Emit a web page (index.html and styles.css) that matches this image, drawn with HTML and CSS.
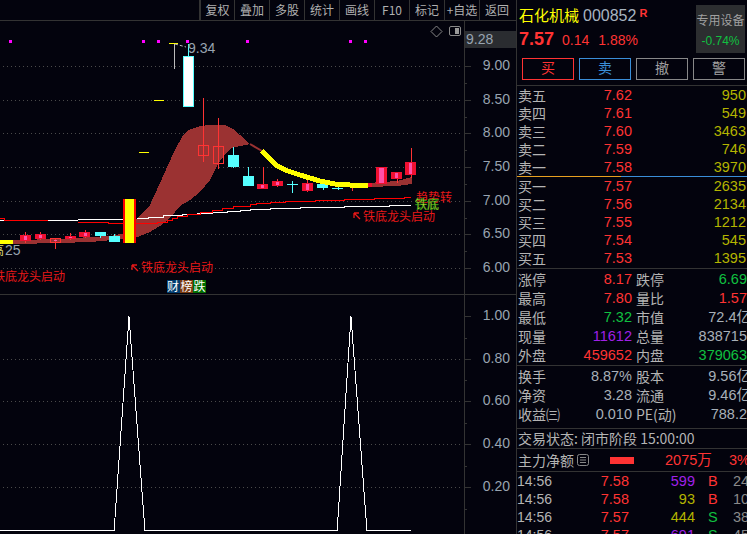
FILE: index.html
```html
<!DOCTYPE html>
<html lang="zh">
<head>
<meta charset="utf-8">
<title>石化机械 000852</title>
<link rel="stylesheet" href="styles.css">
</head>
<body>
<div class="app">
  <main class="main">
    <nav class="toolbar">
      <span class="tool tool-first">复权</span><span class="tool">叠加</span><span class="tool">多股</span><span class="tool">统计</span><span class="tool">画线</span><span class="tool">F10</span><span class="tool">标记</span><span class="tool">+自选</span><span class="tool">返回</span>
    </nav>
    <svg class="chart" viewBox="0 21 516 513" width="516" height="513" xmlns="http://www.w3.org/2000/svg">
      <!-- grid -->
      <g class="grid">
        <path d="M3 66.5H462M3 100.5H462M3 133.5H462M3 167.5H462M3 201.5H462M3 234.5H462M3 268.5H462"/>
        <path d="M3 359.5H462M3 401.5H462M3 444.5H462M3 487.5H462"/>
      </g>
      <path class="rule" d="M464.5 21V534M0 294.5H516"/>
      <path class="rule" d="M464 66.5H471M464 100.5H471M464 133.5H471M464 167.5H471M464 201.5H471M464 234.5H471M464 268.5H471M464 83.5H467M464 117.5H467M464 150.5H467M464 184.5H467M464 218.5H467M464 251.5H467M464 316.5H471M464 359.5H471M464 401.5H471M464 444.5H471M464 487.5H471M464 338.5H467M464 380.5H467M464 423.5H467M464 466.5H467M464 509.5H467"/>

      <!-- axis -->
      <rect class="price-tag" x="465" y="31" width="51" height="17"/>
      <text class="axis" x="466" y="43.500">9.28</text>
      <g class="axis axis-end">
        <text x="510" y="70">9.00</text><text x="510" y="104">8.50</text><text x="510" y="137">8.00</text><text x="510" y="171">7.50</text><text x="510" y="205">7.00</text><text x="510" y="238">6.50</text><text x="510" y="272">6.00</text>
        <text x="510" y="320">1.00</text><text x="510" y="363">0.80</text><text x="510" y="405">0.60</text><text x="510" y="448">0.40</text><text x="510" y="491">0.20</text>
      </g>

      <!-- top icons -->
      <path class="icon-line" d="M436.5 26L442 31.5L436.5 37L431 31.5Z"/>
      <rect class="icon-line" x="449.5" y="26.5" width="11" height="9" rx="1.5"/>
      <rect class="icon-fill" x="455" y="28" width="4" height="6"/>

      <!-- magenta markers -->
      <g class="marker">
        <rect x="9" y="40" width="3" height="3"/><rect x="142" y="40" width="3" height="3"/><rect x="157" y="40" width="3" height="3"/><rect x="186" y="40" width="3" height="3"/><rect x="246" y="40" width="3" height="3"/><rect x="349" y="40" width="3" height="3"/><rect x="364" y="40" width="3" height="3"/>
      </g>

      <!-- short yellow dashes -->
      <path class="dash" d="M154 100.5H164M139 152.5H149M169 43.5H178"/>

      <!-- cloud and band -->
      <polygon class="cloud" points="135,220 143,213 150,205 160,183 168,165 175,150 182,137 188,130 200,126 210,125 225,125 233,129 240,135 250,144 240,146 232,148 225,154 218,164 210,180 200,192 190,200 180,206 170,218 160,226 150,232 135,238"/>
      <polyline class="cloud-line" points="250,144 262,151"/>
      <polygon class="cloud" points="13,240 60,239 90,237 110,236 125,233 125,239 90,242 60,243 13,244"/>
      <polygon class="cloud" points="368,183 397,181 412,177 412,184 397,186 368,187"/>

      <!-- moving lines -->
      <path class="line-white" d="M0 220.5H19M48 220.5H78M78 219.5H125M137 218.5H148V217.5H163V215.5H182V214.5H197V213.5H212V212.5H227V211.5H240V210.5H250V209.5H270V208.5H300V207.5H344V206.5H389V205.5H411"/>
      <path class="line-red" d="M0 218.5H4V220.5H19V220.5H48M78 222.5H108V223.5H124M135 223.5H157V222.5H167V220.5H172V218.5H177V216.5H187V214.5H200V212.5H212V210.5H222V208.5H233V206.5H250V204.5H256V203.5H270V202.5H285V201.5H315V200.5H344V199.5H374V198.5H404V197.5H411"/>

      <!-- candles -->
      <g class="wick-red">
        <path d="M25.5 232V243M40.5 232V240M55.5 238V249M70.5 233V240M85.5 230V238M203.5 98V162M218.5 118V169M263.5 167V188M277.5 179V187M307.5 180V192M352.5 187V191M397.5 172V183M411.5 148V178"/>
      </g>
      <g class="wick-cyan">
        <path d="M100.5 236V238M114.5 234V238M233.5 147V168M248.5 167V177M292.5 181V193M287 184.5H298M323.5 185V190M338.5 183V190M332 188.5H343"/>
      </g>
      <g class="body-red">
        <rect x="20" y="235" width="11" height="6"/><rect x="35" y="234" width="11" height="5"/><rect x="65" y="236" width="11" height="3"/><rect x="79" y="232" width="11" height="5"/>
        <rect x="257" y="184" width="11" height="5"/><rect x="272" y="181" width="11" height="5"/><rect x="302" y="183" width="11" height="8"/><rect x="361" y="183" width="11" height="4"/><rect x="376" y="167" width="11" height="17"/><rect x="391" y="172" width="11" height="7"/><rect x="405" y="162" width="11" height="13"/>
      </g>
      <g class="body-pink">
        <rect x="24" y="236" width="3" height="4"/><rect x="39" y="235" width="3" height="3"/><rect x="54" y="240" width="3" height="1"/><rect x="69" y="237" width="3" height="1"/><rect x="84" y="233" width="3" height="3"/>
        <rect x="261" y="185" width="3" height="3"/><rect x="276" y="182" width="3" height="3"/><rect x="306" y="184" width="3" height="6"/><rect x="379" y="168" width="5" height="15"/><rect x="395" y="173" width="3" height="5"/><rect x="409" y="163" width="3" height="11"/>
      </g>
      <rect class="body-hollow" x="50.5" y="238.5" width="10" height="4"/>
      <rect class="body-hollow" x="198.5" y="145.5" width="10" height="10"/>
      <rect class="body-hollow" x="213.5" y="146.5" width="10" height="17"/>
      <g class="body-cyan">
        <rect x="95" y="232" width="11" height="4"/><rect x="109" y="236" width="11" height="6"/><rect x="228" y="155" width="11" height="12"/><rect x="243" y="176" width="11" height="10"/><rect x="317" y="184" width="11" height="4"/>
      </g>
      <rect class="body-white" x="183.5" y="56.5" width="10" height="50"/>
      <path class="wick-cyan" d="M188.5 44V56"/>
      <rect class="bar-red" x="123" y="199" width="13" height="44"/>
      <rect class="solid-yellow" x="125" y="199" width="9" height="44"/>

      <!-- thick yellow curve -->
      <polyline class="curve" points="262,151 268,157 276,165 285,170 300,175 320,181 335,184 350,185 368,186"/>
      <rect class="solid-yellow" x="0" y="240" width="13" height="4"/>

      <!-- high mark -->
      <path class="pointer" d="M174.5 44V69"/>
      <path class="pointer-dash" d="M175 44L186 47"/>
      <text class="mark" x="188" y="53">9.34</text>
      <text class="mark-cjk" x="-8" y="255">高</text>
      <text class="mark" x="5" y="255">25</text>

      <!-- signals -->
      <g class="signal">
        <text x="-7" y="281">铁底龙头启动</text>
        <text x="141" y="272">铁底龙头启动</text>
        <text x="363" y="221">铁底龙头启动</text>
        <text x="416" y="202">趋势转</text>
      </g>
      <path class="signal-arrow" d="M132 265L138 271M132 265V270M132 265H137M354 213L360 219M354 213V218M354 213H359"/>
      <text class="signal-yellow" x="415" y="209">铁底</text>

      <!-- badges -->
      <rect class="badge-blue" x="167" y="280" width="13" height="13"/>
      <rect class="badge-brown" x="180" y="280" width="13" height="13"/>
      <rect class="badge-green" x="193" y="280" width="13" height="13"/>
      <g class="badge-text">
        <text x="167" y="291">财</text><text x="180.500" y="291">榜</text><text x="193.500" y="291">跌</text>
      </g>

      <!-- lower indicator -->
      <path class="peak" d="M0 530.500H114.500V525L129 316.500L144.500 525V530.500H337.500V525L351 316.500L366.500 525V530.500H411"/>
    </svg>
  </main>

  <aside class="side">
    <header class="head">
      <div class="head-top">
        <div class="head-info">
          <div class="title-row"><span class="stock-name">石化机械</span><span class="stock-code">000852</span><span class="stock-flag">R</span></div>
          <div class="quote-row"><span class="quote-price">7.57</span><span class="quote-change">0.14</span><span class="quote-change">1.88%</span></div>
        </div>
        <div class="sector"><span class="sector-name">专用设备</span><span class="sector-pct">-0.74%</span></div>
      </div>
      <div class="actions">
        <span class="action action-buy">买</span><span class="action action-sell">卖</span><span class="action">撤</span><span class="action">警</span>
      </div>
    </header>

    <section class="book">
      <div class="level"><span class="lbl">卖五</span><span class="red">7.62</span><span class="vol">950</span></div>
      <div class="level"><span class="lbl">卖四</span><span class="red">7.61</span><span class="vol">549</span></div>
      <div class="level"><span class="lbl">卖三</span><span class="red">7.60</span><span class="vol">3463</span></div>
      <div class="level"><span class="lbl">卖二</span><span class="red">7.59</span><span class="vol">746</span></div>
      <div class="level"><span class="lbl">卖一</span><span class="red">7.58</span><span class="vol">3970</span></div>
    </section>
    <div class="split"></div>
    <section class="book book-bid">
      <div class="level"><span class="lbl">买一</span><span class="red">7.57</span><span class="vol">2635</span></div>
      <div class="level"><span class="lbl">买二</span><span class="red">7.56</span><span class="vol">2134</span></div>
      <div class="level"><span class="lbl">买三</span><span class="red">7.55</span><span class="vol">1212</span></div>
      <div class="level"><span class="lbl">买四</span><span class="red">7.54</span><span class="vol">545</span></div>
      <div class="level"><span class="lbl">买五</span><span class="red">7.53</span><span class="vol">1395</span></div>
    </section>

    <section class="stats">
      <div class="stat"><span class="lbl">涨停</span><span class="red">8.17</span><span class="lbl">跌停</span><span class="green">6.69</span></div>
      <div class="stat"><span class="lbl">最高</span><span class="red">7.80</span><span class="lbl">量比</span><span class="red">1.57</span></div>
      <div class="stat"><span class="lbl">最低</span><span class="green">7.32</span><span class="lbl">市值</span><span class="val over">72.4亿</span></div>
      <div class="stat"><span class="lbl">现量</span><span class="purple">11612</span><span class="lbl">总量</span><span class="val">838715</span></div>
      <div class="stat"><span class="lbl">外盘</span><span class="red">459652</span><span class="lbl">内盘</span><span class="green">379063</span></div>
    </section>

    <section class="stats stats-last">
      <div class="stat"><span class="lbl">换手</span><span class="val">8.87%</span><span class="lbl">股本</span><span class="val over">9.56亿</span></div>
      <div class="stat"><span class="lbl">净资</span><span class="val">3.28</span><span class="lbl">流通</span><span class="val over">9.46亿</span></div>
      <div class="stat"><span class="lbl">收益㈢</span><span class="val">0.010</span><span class="lbl">PE(动)</span><span class="val">788.2</span></div>
    </section>

    <div class="status">交易状态: 闭市阶段 15:00:00</div>

    <div class="flow">
      <span class="lbl">主力净额</span>
      <svg class="flow-icon" viewBox="0 0 12 12" width="12" height="12" xmlns="http://www.w3.org/2000/svg"><rect x="0.500" y="0.500" width="11" height="11" rx="2"/><path d="M3 3.500H9M3 6H9M3 8.500H9"/></svg>
      <span class="flow-bar"></span>
      <span class="flow-amt">2075万</span>
      <span class="flow-pct">3%</span>
    </div>

    <section class="ticks">
      <div class="tick"><span class="lbl">14:56</span><span class="red">7.58</span><span class="purple">599</span><span class="red">B</span><span class="tick-n">24</span></div>
      <div class="tick"><span class="lbl">14:56</span><span class="red">7.58</span><span class="vol">93</span><span class="red">B</span><span class="tick-n">10</span></div>
      <div class="tick"><span class="lbl">14:56</span><span class="red">7.57</span><span class="vol">444</span><span class="green">S</span><span class="tick-n">38</span></div>
      <div class="tick"><span class="lbl">14:56</span><span class="red">7.57</span><span class="purple">691</span><span class="green">S</span><span class="tick-n">45</span></div>
    </section>
  </aside>
</div>
</body>
</html>
```
FILE: styles.css
```css
* { box-sizing: border-box; }
html, body { margin: 0; padding: 0; background: #03030d; }
body {
  font-family: "Liberation Sans", "Noto Sans CJK SC", sans-serif;
  color: #b4b4b4;
  font-size: 14.5px;
}
.app { display: flex; width: 747px; height: 534px; overflow: hidden; background: #03030d; }
.main { width: 516px; flex: none; display: flex; flex-direction: column; }

/* toolbar */
.toolbar { height: 21px; display: flex; justify-content: flex-end; border-bottom: 1px solid #333; flex: none; padding-right: 2px; }
.tool { width: 35px; height: 20px; border-left: 1px solid #333; font-size: 12px; line-height: 19px; text-align: center; color: #b0b0b0; white-space: nowrap; overflow: hidden; font-family: "Noto Sans CJK SC", sans-serif; }
.tool-first { border-left: 2px solid #333; }

/* chart */
.chart { display: block; flex: none; }
.chart text { font-family: "Liberation Sans", "Noto Sans CJK SC", sans-serif; }
.grid path { stroke: #4a4a4a; stroke-width: 1; stroke-dasharray: 1 3; fill: none; }
.rule { stroke: #333; stroke-width: 1; fill: none; }
.price-tag { fill: #2a2c30; }
.axis { font-size: 14px; fill: #98a4b0; }
.axis-end text { text-anchor: end; }
.icon-line { fill: none; stroke: #888; stroke-width: 1; }
.icon-fill { fill: #999; }
.marker rect { fill: #f0f; }
.dash { stroke: #ff0; stroke-width: 1; shape-rendering: crispEdges; }
.cloud { fill: #9b3232; shape-rendering: crispEdges; }
.cloud-line { fill: none; stroke: #9b3232; stroke-width: 2; }
.line-white { fill: none; stroke: #fff; stroke-width: 1; shape-rendering: crispEdges; }
.line-red { fill: none; stroke: #f00; stroke-width: 1; shape-rendering: crispEdges; }
.wick-red { fill: none; stroke: #f33; stroke-width: 1; shape-rendering: crispEdges; }
.wick-cyan { fill: none; stroke: #5ff; stroke-width: 1; shape-rendering: crispEdges; }
.body-red rect { fill: #f01030; }
.body-pink rect { fill: #ff50a8; }
.body-hollow { fill: none; stroke: #f33; stroke-width: 1.500; shape-rendering: crispEdges; }
.body-cyan rect { fill: #5ff; }
.body-white { fill: #fff; stroke: #5ff; stroke-width: 1; shape-rendering: crispEdges; }
.bar-red { fill: #f00; }
.solid-yellow { fill: #ff0; }
.curve { fill: none; stroke: #ff0; stroke-width: 5; shape-rendering: crispEdges; }
.pointer { fill: none; stroke: #bbb; stroke-width: 1; shape-rendering: crispEdges; }
.pointer-dash { fill: none; stroke: #bbb; stroke-width: 1; stroke-dasharray: 3 2; }
.mark { font-size: 14px; fill: #98a4b0; }
.mark-cjk { font-size: 12px; fill: #d8d870; }
.signal text { font-size: 12px; fill: #e81818; }
.signal-arrow { fill: none; stroke: #e81818; stroke-width: 1.300; }
.signal-yellow { font-size: 12px; fill: #f0f040; stroke: #0a8a0a; stroke-width: 0.400; }
.badge-blue { fill: #003c6e; }
.badge-brown { fill: #7a3a10; }
.badge-green { fill: #006e00; }
.badge-text text { font-size: 12px; fill: #fff; }
.peak { fill: none; stroke: #fff; stroke-width: 1; shape-rendering: crispEdges; }

/* side panel */
.side { width: 231px; flex: none; border-left: 1px solid #333; display: flex; flex-direction: column; overflow: hidden; }
.head { height: 86px; flex: none; border-bottom: 1px solid #333; display: flex; flex-direction: column; }
.head-top { display: flex; height: 58px; flex: none; padding: 5px 2px 0 2px; justify-content: space-between; }
.head-info { display: flex; flex-direction: column; }
.title-row { display: flex; align-items: baseline; height: 20px; white-space: nowrap; }
.stock-name { font-size: 15px; color: #ff0; line-height: 20px; font-family: "Noto Sans CJK SC", sans-serif; }
.stock-code { font-size: 16px; color: #a8b4c0; margin-left: 4px; line-height: 20px; }
.stock-flag { font-size: 11px; font-weight: bold; color: #f33; margin-left: 3px; position: relative; top: -4px; }
.quote-row { display: flex; align-items: baseline; margin-top: 1px; line-height: 26px; color: #f33; }
.quote-price { font-size: 18px; font-weight: bold; width: 43px; }
.quote-change { font-size: 14px; margin-right: 9px; }
.sector { width: 49px; height: 48px; background: #2c2e30; display: flex; flex-direction: column; align-items: center; flex: none; }
.sector-name { font-size: 12px; color: #a0a0a0; line-height: 16px; margin-top: 7px; white-space: nowrap; font-family: "Noto Sans CJK SC", sans-serif; }
.sector-pct { font-size: 12px; color: #10c040; line-height: 16px; margin-top: 5px; }
.actions { display: flex; gap: 5px; padding-left: 5px; }
.action { width: 52px; height: 22px; border: 1px solid #888; text-align: center; font-size: 14px; line-height: 19px; color: #a0a0a0; flex: none; }
.action-buy { border-color: #f33; color: #f33; }
.action-sell { border-color: #3a8ed8; color: #3a8ed8; }

.book { height: 90px; flex: none; }
.book-bid { height: 92px; border-bottom: 1px solid #333; }
.split { height: 1px; flex: none; background: linear-gradient(to right, #e8a020 0 104px, #3a8ed8 104px); }
.level { display: grid; grid-template-columns: 50px 64px 1fr; height: 18px; line-height: 18px; padding: 0 1px 0 1px; }
.level span:nth-child(2), .level span:nth-child(3) { text-align: right; }
.lbl { color: #b4b4b4; white-space: nowrap; font-size: 14px; }
.level .lbl, .stat .lbl { font-family: "Noto Sans CJK SC", sans-serif; }
.red { color: #f33; }
.green { color: #10c040; }
.purple { color: #a020e8; }
.val { color: #a8b0b8; white-space: nowrap; }
.vol { color: #b4b400; }

.stats { height: 97px; flex: none; padding-top: 1px; border-bottom: 1px solid #333; }
.stats-last { height: 63px; }
.stat { display: grid; grid-template-columns: 50px 64px 44px 1fr; height: 19px; line-height: 19px; padding: 0 0 0 1px; white-space: nowrap; }
.stat span:nth-child(2), .stat span:nth-child(4) { text-align: right; }
.stat span:nth-child(3) { padding-left: 4px; }
.over { margin-right: -4px; }

.status { height: 20px; flex: none; line-height: 19px; border-bottom: 1px solid #333; font-size: 14px; padding-left: 1px; color: #b4b4b4; white-space: nowrap; font-family: "Noto Sans CJK SC", "Liberation Sans", sans-serif; }
.flow { height: 23px; flex: none; display: flex; align-items: center; border-bottom: 1px solid #333; padding-left: 1px; line-height: 16px; font-family: "Noto Sans CJK SC", sans-serif; }
.flow-icon { margin-left: 3px; flex: none; }
.flow-icon rect, .flow-icon path { fill: none; stroke: #888; stroke-width: 1; }
.flow-bar { width: 24px; height: 7px; background: #f33; margin-left: 21px; flex: none; }
.flow-amt { color: #f33; width: 46px; margin-left: 31px; font-size: 14.500px; line-height: 16px; white-space: nowrap; flex: none; font-family: "Liberation Sans", "Noto Sans CJK SC", sans-serif; }
.flow-pct { color: #f33; margin-left: 18px; font-size: 14.500px; line-height: 16px; font-family: "Liberation Sans", sans-serif; }

.ticks { flex: none; }
.tick { display: grid; grid-template-columns: 48px 64px 66px 25px 1fr; height: 18px; line-height: 18px; white-space: nowrap; }
.tick .lbl { font-size: 14px; }
.tick span:nth-child(2), .tick span:nth-child(3) { text-align: right; }
.tick span:nth-child(4) { padding-left: 13px; }
.tick-n { color: #8a8a8a; padding-left: 13px; }
```
